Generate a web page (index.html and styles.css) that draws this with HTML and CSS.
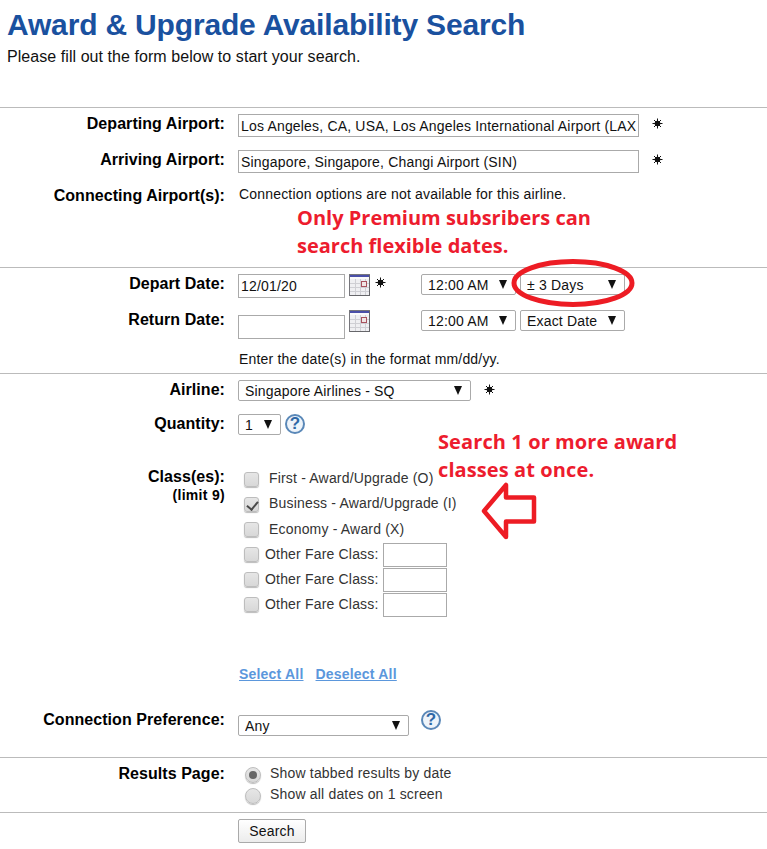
FILE: index.html
```html
<!DOCTYPE html>
<html lang="en">
<head>
    <meta charset="UTF-8">
    <title>Award &amp; Upgrade Availability Search</title>
    <link rel="stylesheet" href="styles.css">
</head>
<body>
<div class="page">
    <header class="intro">
        <h1>Award &amp; Upgrade Availability Search</h1>
        <p>Please fill out the form below to start your search.</p>
    </header>

    <form>
        <section class="section section-airports">
            <div class="row">
                <label class="label">Departing Airport:</label>
                <div class="field">
                    <input class="text wide" type="text" value="Los Angeles, CA, USA, Los Angeles International Airport (LAX)">
                    <svg class="star star-airport" viewBox="0 0 11 11"><use href="#star"/></svg>
                </div>
            </div>
            <div class="row">
                <label class="label">Arriving Airport:</label>
                <div class="field">
                    <input class="text wide" type="text" value="Singapore, Singapore, Changi Airport (SIN)">
                    <svg class="star star-airport" viewBox="0 0 11 11"><use href="#star"/></svg>
                </div>
            </div>
            <div class="row">
                <label class="label">Connecting Airport(s):</label>
                <div class="field note note-connect">Connection options are not available for this airline.</div>
            </div>
        </section>

        <section class="section section-dates">
            <div class="row">
                <label class="label">Depart Date:</label>
                <div class="field">
                    <div class="date-box">
                        <input class="text date" type="text" value="12/01/20">
                        <svg class="calendar" viewBox="0 0 21 22"><use href="#calendar"/></svg>
                        <svg class="star star-date" viewBox="0 0 11 11"><use href="#star"/></svg>
                    </div>
                    <span class="select time"><select><option>12:00 AM</option></select></span>
                    <span class="select range"><select><option>± 3 Days</option></select></span>
                </div>
            </div>
            <div class="row row-return">
                <label class="label">Return Date:</label>
                <div class="field">
                    <div class="date-box">
                        <input class="text date date-return" type="text">
                        <svg class="calendar" viewBox="0 0 21 22"><use href="#calendar"/></svg>
                    </div>
                    <span class="select time"><select><option>12:00 AM</option></select></span>
                    <span class="select range"><select><option>Exact Date</option></select></span>
                </div>
            </div>
            <div class="row row-hint">
                <span></span>
                <div class="field note">Enter the date(s) in the format mm/dd/yy.</div>
            </div>
        </section>

        <section class="section section-options">
            <div class="row">
                <label class="label">Airline:</label>
                <div class="field">
                    <span class="select airline"><select><option>Singapore Airlines - SQ</option></select></span>
                    <svg class="star star-airline" viewBox="0 0 11 11"><use href="#star"/></svg>
                </div>
            </div>
            <div class="row row-quantity">
                <label class="label">Quantity:</label>
                <div class="field">
                    <span class="select quantity"><select><option>1</option></select></span>
                    <span class="help">?</span>
                </div>
            </div>
            <div class="row row-classes">
                <label class="label">Class(es):<small>(limit 9)</small></label>
                <div class="classes">
                    <label class="check"><input type="checkbox"><span>First - Award/Upgrade (O)</span></label>
                    <label class="check"><input type="checkbox" checked><span>Business - Award/Upgrade (I)</span></label>
                    <label class="check check-economy"><input type="checkbox"><span>Economy - Award (X)</span></label>
                    <label class="check other"><input type="checkbox"><span>Other Fare Class:</span><input class="text fare" type="text"></label>
                    <label class="check other"><input type="checkbox"><span>Other Fare Class:</span><input class="text fare" type="text"></label>
                    <label class="check other"><input type="checkbox"><span>Other Fare Class:</span><input class="text fare" type="text"></label>
                </div>
            </div>
            <div class="row row-links">
                <span></span>
                <div class="links"><a href="#">Select All</a><a href="#">Deselect All</a></div>
            </div>
            <div class="row row-connection">
                <label class="label">Connection Preference:</label>
                <div class="field">
                    <span class="select connection"><select><option>Any</option></select></span>
                    <span class="help help-connection">?</span>
                </div>
            </div>
        </section>

        <section class="section section-results">
            <div class="row">
                <label class="label">Results Page:</label>
                <div class="radios">
                    <label class="radio"><input type="radio" name="results" checked><span>Show tabbed results by date</span></label>
                    <label class="radio"><input type="radio" name="results"><span>Show all dates on 1 screen</span></label>
                </div>
            </div>
        </section>

        <section class="section section-submit">
            <div class="row">
                <span></span>
                <div class="field"><button type="button">Search</button></div>
            </div>
        </section>
    </form>

    <!-- annotations drawn over the screenshot -->
    <div class="callout callout-premium">Only Premium subsribers can<br>search flexible dates.</div>
    <div class="callout callout-classes">Search 1 or more award<br>classes at once.</div>
    <svg class="mark mark-ellipse" viewBox="0 0 124 50"><ellipse cx="62" cy="25" rx="59" ry="21.5"/></svg>
    <svg class="mark mark-arrow" viewBox="0 0 60 60"><path d="M5 30 27 4V16.500H55V40.500H27V56Z"/></svg>
</div>

<svg class="defs" width="0" height="0">
    <defs>
        <g id="star">
            <path d="M5.5 .5v10M.5 5.5h10M2 2l7 7M9 2l-7 7" stroke="#111" stroke-width="1" fill="none"/>
            <circle cx="5.5" cy="5.5" r="2.8" fill="#111"/>
        </g>
        <g id="calendar">
            <rect x=".5" y=".5" width="20" height="21" fill="#efeff2" stroke="#77777c"/>
            <rect x="1" y="1" width="19" height="2" fill="#4a4fa8"/>
            <rect x="1" y="3" width="19" height="2" fill="#fafafa"/>
            <path d="M6.5 5v16M11.5 5v16M16.5 5v16M1 9.500h19M1 13.500h19M1 17.500h19" stroke="#cfcfd4" fill="none"/>
            <rect x="12.500" y="7.500" width="5" height="5" fill="#f0e4e4" stroke="#a8525e"/>
            <path d="M20.500 1v21M1 21.500h20" stroke="#66666a" fill="none"/>
        </g>
    </defs>
</svg>
</body>
</html>
```

FILE: styles.css
```css
* {
    box-sizing: border-box;
}

body {
    margin: 0;
    background: #fff;
    color: #111;
    font-family: "Liberation Sans", Arial, sans-serif;
    font-size: 14px;
    letter-spacing: .18px;
}

.page {
    position: relative;
    height: 849px;
    overflow: hidden;
}

.intro {
    height: 107px;
    padding: 7px 0 0 7px;
}

h1 {
    margin: 0;
    color: #1a519f;
    font-size: 30px;
    letter-spacing: -.17px;
    line-height: 36px;
}

.intro p {
    margin: 5px 0 0;
    font-size: 16px;
    letter-spacing: .06px;
    line-height: 18px;
}

.section {
    border-top: 1px solid #bbb;
    padding-top: 6px;
}

.section-airports { padding-bottom: 62px; }
.section-dates { padding-bottom: 5px; }
.section-options { padding-bottom: 21px; }
.section-results { padding-bottom: 6px; }
.section-submit { padding-bottom: 6px; }

.row {
    display: grid;
    grid-template-columns: 225px 1fr;
    column-gap: 13px;
    margin-top: 13px;
}

.section .row:first-child {
    margin-top: 0;
}

.label {
    padding-top: 1px;
    color: #000;
    font-size: 16px;
    font-weight: bold;
    letter-spacing: .06px;
    line-height: 18px;
    text-align: right;
}

.label small {
    display: block;
    font-size: 14px;
    letter-spacing: .3px;
    line-height: 18px;
}

.field {
    display: flex;
    align-items: flex-start;
}

.note {
    padding-left: 1px;
    line-height: 18px;
}

.note-connect {
    margin-top: -1px;
}

.text {
    height: 23px;
    border: 1px solid #aaa;
    padding: 0 2px;
    background: #fff;
    color: #111;
    font-family: inherit;
    font-size: 14px;
    letter-spacing: .18px;
    outline: none;
}

.wide {
    width: 401px;
}

.date {
    width: 107px;
    height: 24px;
}

.date-return {
    margin-top: 5px;
}

.date-box {
    display: flex;
    align-items: flex-start;
    width: 183px;
}

.calendar {
    width: 21px;
    height: 22px;
    margin-left: 4px;
}

.star {
    width: 11px;
    height: 11px;
}

.star-airport { margin: 4px 0 0 13px; }
.star-date { margin: 3px 0 0 5px; }
.star-airline { margin: 4px 0 0 13px; }

.select {
    position: relative;
    display: block;
    height: 21px;
}

.select select {
    display: block;
    width: 100%;
    height: 100%;
    border: 1px solid #aaa;
    border-radius: 2px;
    padding: 1px 0 0 6px;
    background: #fff;
    color: #111;
    font-family: inherit;
    font-size: 14px;
    letter-spacing: .18px;
    appearance: none;
}

.select::after {
    content: "";
    position: absolute;
    top: 6px;
    right: 9px;
    border-top: 9px solid #111;
    border-left: 4.5px solid transparent;
    border-right: 4.5px solid transparent;
}

.time { width: 95px; }
.range { width: 105px; margin-left: 4px; }
.airline { width: 233px; }
.quantity { width: 43px; }
.connection { width: 171px; margin-top: 5px; }

.row-return { margin-top: 12px; }
.row-hint { margin-top: 11px; }
.row-quantity { margin-top: 13px; }
.row-classes { margin-top: 32px; }
.row-links { margin-top: 48px; }
.row-connection { margin-top: 27px; }

.help {
    width: 20px;
    height: 20px;
    margin-left: 4px;
    border: 2px solid #5a88b8;
    border-radius: 50%;
    background: #eef4fa;
    color: #2f68a6;
    font-size: 17px;
    font-weight: bold;
    letter-spacing: 0;
    line-height: 16px;
    text-align: center;
}

.help-connection {
    margin-left: 12px;
}

.classes {
    padding-left: 6px;
    color: #333;
}

.check {
    display: flex;
    align-items: center;
    height: 25px;
}

.check span {
    margin: -3px 0 0 10px;
}

.check-economy span {
    margin-top: -1px;
}

.other span {
    margin: -1px 0 0 6px;
}

.check input[type="checkbox"],
.radio input {
    flex: none;
    appearance: none;
    position: relative;
    margin: 0;
    border: 1px solid #bdbdbd;
    background: linear-gradient(#e6e6e6, #d8d8d8);
    box-shadow: 0 1px 1px #bbb;
}

.check input[type="checkbox"] {
    width: 15px;
    height: 15px;
    border-radius: 3px;
}

.check input[type="checkbox"]:checked::after {
    content: "";
    position: absolute;
    left: 4px;
    top: 1px;
    width: 5px;
    height: 9px;
    border: solid #4a4a4a;
    border-width: 0 2.5px 2.5px 0;
    transform: rotate(40deg);
}

.fare {
    width: 64px;
    height: 24px;
    margin-left: 4px;
}

.links {
    display: flex;
    gap: 12px;
    margin-left: 1px;
    font-size: 14px;
    font-weight: bold;
    letter-spacing: .2px;
    line-height: 18px;
}

.links a {
    color: #5b97dc;
}

.radios {
    margin-top: 0;
    color: #333;
}

.radio {
    display: flex;
    align-items: flex-start;
    height: 21px;
    line-height: 18px;
}

.radio input {
    width: 16px;
    height: 16px;
    margin: 3px 0 0 7px;
    border-radius: 50%;
}

.radio input:checked::after {
    content: "";
    position: absolute;
    left: 3px;
    top: 3px;
    width: 8px;
    height: 8px;
    border-radius: 50%;
    background: #666;
}

.radio span {
    margin-left: 9px;
}

button {
    display: block;
    width: 68px;
    height: 24px;
    border: 1px solid #aaa;
    border-radius: 2px;
    padding: 0;
    background: linear-gradient(#fff, #ececec);
    color: #111;
    font-family: inherit;
    font-size: 14px;
    letter-spacing: .18px;
}

.callout {
    position: absolute;
    color: #ed1c2e;
    font-family: "Open Sans", sans-serif;
    font-size: 20px;
    font-weight: 700;
    letter-spacing: 0;
    line-height: 28px;
    white-space: nowrap;
}

.callout-premium {
    left: 297px;
    top: 204px;
}

.callout-classes {
    left: 438px;
    top: 428px;
    letter-spacing: .1px;
}

.mark {
    position: absolute;
    fill: none;
    stroke: #ed1c24;
    stroke-width: 5;
}

.mark-ellipse {
    left: 511px;
    top: 258px;
    width: 124px;
    height: 50px;
}

.mark-arrow {
    left: 479px;
    top: 481px;
    width: 60px;
    height: 60px;
    stroke-linejoin: round;
    stroke-width: 4.500;
}

.defs {
    position: absolute;
}
```
